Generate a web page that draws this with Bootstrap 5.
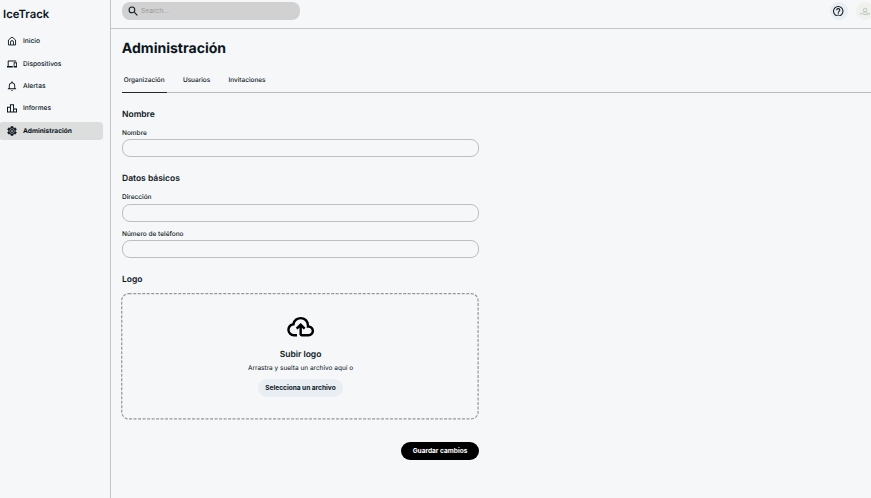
<!DOCTYPE html>
<html lang="es">
<head>
<meta charset="utf-8">
<meta name="viewport" content="width=device-width, initial-scale=1">
<title>IceTrack – Administración</title>
<link href="https://cdn.jsdelivr.net/npm/bootstrap@5.3.0/dist/css/bootstrap.min.css" rel="stylesheet">
<style>
body{font-family:Inter,"Liberation Sans",sans-serif;font-size:6.5px;line-height:10px;background:#f5f7f9;color:#0c151c;text-rendering:geometricPrecision}
svg{display:block;flex:none;fill:currentColor}
.sidebar{width:111px;border-right:1px solid #c4c5c7}
.brand{font-size:11.3px;line-height:14px;font-weight:600;padding:6.5px 0 0 3px;margin-bottom:11.7px}
.side-nav{gap:3.85px}
.side-nav .nav-link{width:103px;height:18.5px;padding:0 0 0 7px;gap:6px;color:#0c151c;font-size:6.6px;font-weight:450;border-radius:2px 4px 4px 2px}
.side-nav .nav-link.active{background:#dcdddd;font-weight:700;color:#0c151c;font-size:6.6px}
.topbar{height:29px;border-bottom:1px solid #c4c5c7;padding:2px 0 0 11px}
.search-box{width:178.4px;height:18px;border-radius:8px;background:#d1d1d1;padding-left:6px;gap:2.4px}
.search-box input{font-size:6.7px;line-height:10px;color:#555}
.search-box input::placeholder{color:#999;opacity:1}
.user-tools{margin-right:-3px;gap:8.5px}
.round-btn{width:18px;height:18px;border-radius:50%;background:#e8eef4;flex:none}
.user-btn{background:#f0f0ec;color:#b4c0ba}
h1{font-size:14.05px;line-height:18px;font-weight:700;margin:10.5px 0 0 10.8px}
.tabs{margin:15.5px 0 0 11px;gap:14.5px;height:20px;border-bottom:1px solid #b9bbbd}
.tabs .nav-link{font-size:6.45px;line-height:10px;font-weight:500;color:#0c151c;padding:2px 2px 0 1.8px;height:20px}
.tabs .nav-link.active{border-bottom:1.5px solid #25282b}
.settings-form{width:357px;margin-left:11px}
.settings-form section{padding-top:15.6px}
h2{font-size:8.5px;line-height:12px;font-weight:600;margin:0}
.form-label{font-size:6.5px;line-height:10px;font-weight:500;margin:7.3px 0 1.4px}
.settings-form .form-control{height:18px;min-height:0;border:1px solid #bcbebf;border-radius:8px;background:transparent;font-size:7px;padding:0 6px}
.drop-zone{height:126.5px;padding-top:19px;margin-top:7.2px}
.drop-frame{left:-.9px;top:0;width:358px;height:100%}
.drop-hint{margin:1.7px 0 6.2px}
.btn-pill{font-size:6.55px;line-height:10px;font-weight:700;border:0;padding:4px 0;border-radius:9px;width:85px;height:18px;color:#0c151c;background:#e8eef4}
.btn-save{background:#000;color:#fff;width:78px}
.form-actions{padding-top:22px}
</style>
<script src="https://cdn.jsdelivr.net/npm/bootstrap@5.3.0/dist/js/bootstrap.bundle.min.js"></script>
</head>
<body class="vh-100 overflow-hidden">
<div class="d-flex h-100">
  <aside class="sidebar flex-shrink-0">
    <div class="brand">IceTrack</div>
    <nav class="nav flex-column side-nav">
      <a class="nav-link d-flex align-items-center" href="#"><svg width="10" height="10" viewBox="0 0 24 24" stroke="currentColor" stroke-width="2.200" style="fill:none"><path d="M3.500 9.500 12 2.500l8.500 7V21.500h-17zM8.500 21v-6.500a3.500 3.500 0 0 1 7 0V21"/></svg>Inicio</a>
      <a class="nav-link d-flex align-items-center" href="#"><svg width="10" height="10" viewBox="0 0 24 24"><path d="M4 6h18V3.500H4c-1.300 0-2.300 1-2.300 2.300V17H0v3.500h14V17H4V6zm19 2h-6c-.55 0-1 .45-1 1v10.500c0 .55.45 1 1 1h6c.55 0 1-.45 1-1V9c0-.55-.45-1-1-1zm-1 9h-4v-7h4v7z"/></svg>Dispositivos</a>
      <a class="nav-link d-flex align-items-center" href="#"><svg width="10" height="10" viewBox="1 1 22 22"><path d="M12 23c1.100 0 2-.9 2-2h-4c0 1.100.9 2 2 2zm7-6v-6c0-3.350-2.360-6.150-5.500-6.830V3c0-.83-.67-1.500-1.500-1.500S10.500 2.170 10.500 3v1.170C7.360 4.850 5 7.650 5 11v6H3v2h18v-2h-2zm-2 0H7v-6c0-2.760 2.240-5 5-5s5 2.240 5 5v6z"/></svg>Alertas</a>
      <a class="nav-link d-flex align-items-center" href="#"><svg width="10" height="10" viewBox="1 0 22 22"><path fill-rule="evenodd" d="M16.500 12V3h-9v5H1v13h22v-9h-6.500zM3.200 10.200h4.300v8.600H3.200zM9.700 5.200h4.600v13.600H9.700zM20.800 18.800h-4.300v-4.600h4.300z"/></svg>Informes</a>
      <a class="nav-link active d-flex align-items-center" href="#"><svg width="10" height="10" viewBox="1 1 22 22"><path d="M19.430 12.980c.04-.32.07-.64.07-.98s-.03-.66-.07-.98l2.110-1.650c.19-.15.24-.42.12-.64l-2-3.460c-.12-.22-.39-.3-.61-.22l-2.490 1c-.52-.4-1.080-.73-1.690-.98l-.38-2.650A.49.49 0 0 0 14 2h-4c-.25 0-.46.18-.49.42l-.38 2.650c-.61.25-1.170.59-1.690.98l-2.490-1c-.23-.09-.49 0-.61.22l-2 3.460c-.13.22-.07.49.12.64l2.110 1.650c-.04.32-.07.65-.07.98s.03.66.07.98l-2.110 1.650c-.19.15-.24.42-.12.64l2 3.460c.12.22.39.3.61.22l2.490-1c.52.4 1.080.73 1.690.98l.38 2.650c.03.24.24.42.49.42h4c.25 0 .46-.18.49-.42l.38-2.650c.61-.25 1.170-.59 1.690-.98l2.490 1c.23.09.49 0 .61-.22l2-3.460c.12-.22.07-.49-.12-.64z" stroke="currentColor"/><circle cx="12" cy="12" r="5.200" fill="none" stroke="#dcdddd" stroke-width="1.200"/><circle cx="12" cy="12" r="1.900" fill="#dcdddd"/></svg>Administración</a>
    </nav>
  </aside>
  <main class="flex-grow-1 overflow-hidden">
    <header class="topbar d-flex justify-content-between">
      <div class="search-box d-flex align-items-center">
        <svg width="10.500" height="10.500" viewBox="2 2 20 20"><path d="M15.500 14h-.79l-.28-.27A6.470 6.470 0 0 0 16 9.500 6.500 6.500 0 1 0 9.500 16c1.610 0 3.090-.59 4.230-1.570l.27.28v.79l5 4.990L20.490 19zm-6 0a4.500 4.500 0 1 1 0-9 4.500 4.500 0 0 1 0 9z"/></svg>
        <input class="border-0 bg-transparent p-0" type="text" placeholder="Search...">
      </div>
      <div class="d-flex user-tools">
        <div class="round-btn d-flex align-items-center justify-content-center"><svg width="10.500" height="10.500" viewBox="2 2 20 20"><path d="M11 18h2v-2h-2v2zm1-16a10 10 0 1 0 0 20 10 10 0 0 0 0-20zm0 18a8 8 0 1 1 0-16 8 8 0 0 1 0 16zm0-14a4 4 0 0 0-4 4h2a2 2 0 1 1 4 0c0 2-3 1.750-3 5h2c0-2.250 3-2.500 3-5a4 4 0 0 0-4-4z"/></svg></div>
        <div class="round-btn user-btn d-flex align-items-center justify-content-center"><svg width="11" height="9" viewBox="0 0 11 9" style="fill:none" stroke="currentColor" stroke-width=".8"><circle cx="5" cy="3" r="1.800"/><path d="M.5 7.500V6.500h2l1-1.300h3l1 1.300h2v1M3 7.500h5"/></svg></div>
      </div>
    </header>
    <h1>Administración</h1>
    <nav class="nav tabs">
      <a class="nav-link active" href="#">Organización</a>
      <a class="nav-link" href="#">Usuarios</a>
      <a class="nav-link" href="#">Invitaciones</a>
    </nav>
    <form class="settings-form">
      <section>
        <h2>Nombre</h2>
        <label class="form-label d-block" for="nombre">Nombre</label>
        <input class="form-control" id="nombre">
      </section>
      <section>
        <h2>Datos básicos</h2>
        <label class="form-label d-block" for="direccion">Dirección</label>
        <input class="form-control" id="direccion">
        <label class="form-label d-block" for="telefono">Número de teléfono</label>
        <input class="form-control" id="telefono">
      </section>
      <section>
        <h2>Logo</h2>
        <div class="drop-zone position-relative d-flex flex-column align-items-center">
          <svg class="drop-frame position-absolute" style="fill:none"><rect x=".7" y=".7" width="356.400" height="125.200" rx="7" stroke="#96989b" stroke-width="1.200" stroke-dasharray="3 1.500"/></svg>
          <svg width="29.300" height="29.300" viewBox="0 -960 960 960" color="#000"><path d="M260-160q-91 0-155.500-63T40-377q0-78 47-139t123-78q25-92 100-149t170-57q117 0 198.500 81.500T760-520q69 8 114.500 59.500T920-340q0 75-52.500 127.500T740-160H520q-33 0-56.500-23.500T440-240v-206l-64 62-56-56 160-160 160 160-56 56-64-62v206h220q42 0 71-29t29-71q0-42-29-71t-71-29h-60v-80q0-83-58.500-141.500T480-720q-83 0-141.500 58.500T280-520h-20q-58 0-99 41t-41 99q0 58 41 99t99 41h100v80H260Z"/></svg>
          <h2 class="mt-2">Subir logo</h2>
          <div class="drop-hint">Arrastra y suelta un archivo aquí o</div>
          <button type="button" class="btn btn-pill">Selecciona un archivo</button>
        </div>
      </section>
      <div class="form-actions d-flex justify-content-end"><button type="button" class="btn btn-pill btn-save">Guardar cambios</button></div>
    </form>
  </main>
</div>
</body>
</html>
